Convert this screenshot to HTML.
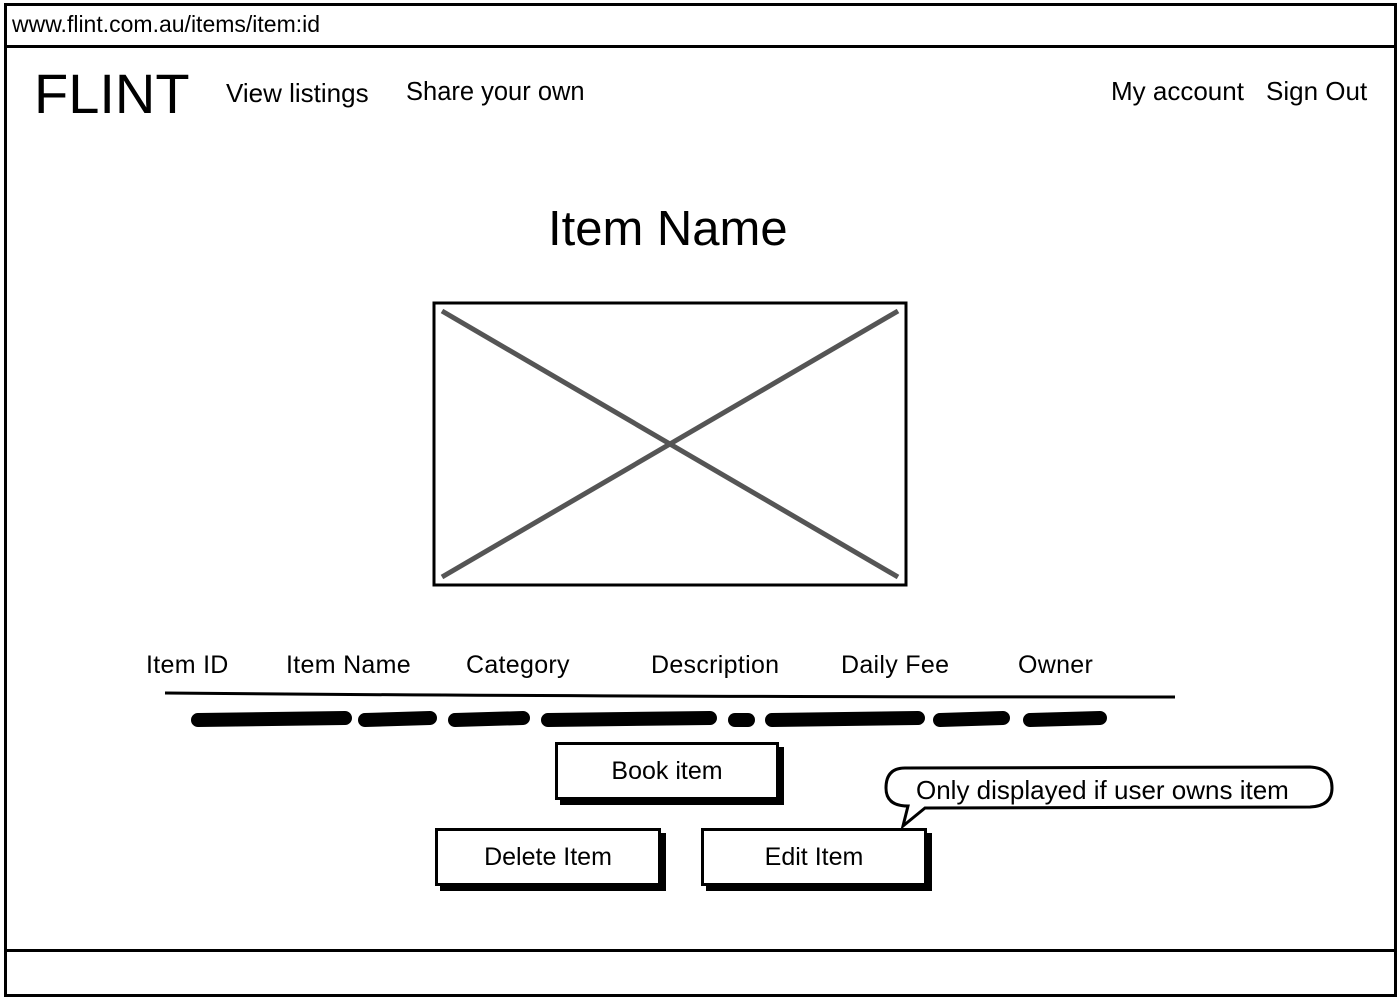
<!DOCTYPE html>
<html><head><meta charset="utf-8"><style>
body{margin:0;width:1400px;height:1000px;background:#fff;font-family:"Liberation Sans",sans-serif;color:#000;position:relative;overflow:hidden}
.a{position:absolute;white-space:nowrap}
.btn{position:absolute;border:3px solid #000;background:#fff;box-shadow:5px 5px 0 #000;font-size:25px;text-align:center;box-sizing:border-box}
.l{font-size:25px;letter-spacing:0.3px}
</style></head><body>
<div class="a" style="left:4px;top:3px;width:1387px;height:988px;border:3px solid #000"></div>
<div class="a" style="left:4px;top:45px;width:1393px;height:3px;background:#000"></div>
<div class="a" style="left:4px;top:949px;width:1393px;height:3px;background:#000"></div>
<div class="a" style="left:12px;top:11px;font-size:23px">www.flint.com.au/items/item:id</div>
<div class="a" style="left:34px;top:61px;font-size:56px">FLINT</div>
<div class="a" style="left:226px;top:78px;font-size:26px">View listings</div>
<div class="a" style="left:406px;top:78px;font-size:25.5px">Share your own</div>
<div class="a" style="left:1111px;top:76px;font-size:26px">My account</div>
<div class="a" style="left:1266px;top:76px;font-size:26px">Sign Out</div>
<div class="a" style="left:548px;top:201px;font-size:49px">Item Name</div>
<svg class="a" style="left:0;top:0" width="1400" height="1000">
<rect x="434" y="303" width="472" height="282" fill="none" stroke="#000" stroke-width="3"/>
<line x1="442" y1="311" x2="898" y2="577" stroke="#555" stroke-width="5"/>
<line x1="898" y1="311" x2="442" y2="577" stroke="#555" stroke-width="5"/>
<path d="M165 693 Q600 697 1175 697" stroke="#000" stroke-width="3" fill="none"/>
<g stroke="#000" stroke-width="14" stroke-linecap="round" fill="none">
<path d="M198 720 L345 718"/><path d="M365 720 L430 718"/><path d="M455 720 L523 718"/>
<path d="M548 720 L710 718"/><path d="M735 720 L748 720"/><path d="M772 720 L918 718"/>
<path d="M940 720 L1003 718"/><path d="M1030 720 L1100 718"/>
</g>
<path d="M905 768 L1310 767 Q1332 768 1332 788 Q1332 806 1310 807 L925 808 L903 826 L908 806 Q886 806 886 788 Q886 768 905 768 Z" fill="#fff" stroke="#000" stroke-width="3"/>
</svg>
<div class="a l" style="left:146px;top:651px">Item ID</div>
<div class="a l" style="left:286px;top:651px">Item Name</div>
<div class="a l" style="left:466px;top:651px">Category</div>
<div class="a l" style="left:651px;top:651px">Description</div>
<div class="a l" style="left:841px;top:651px">Daily Fee</div>
<div class="a l" style="left:1018px;top:651px">Owner</div>
<div class="btn" style="left:555px;top:742px;width:224px;height:58px;line-height:52px">Book item</div>
<div class="btn" style="left:435px;top:828px;width:226px;height:58px;line-height:52px">Delete Item</div>
<div class="btn" style="left:701px;top:828px;width:226px;height:58px;line-height:52px">Edit Item</div>
<div class="a" style="left:916px;top:775px;font-size:26px">Only displayed if user owns item</div>
</body></html>
